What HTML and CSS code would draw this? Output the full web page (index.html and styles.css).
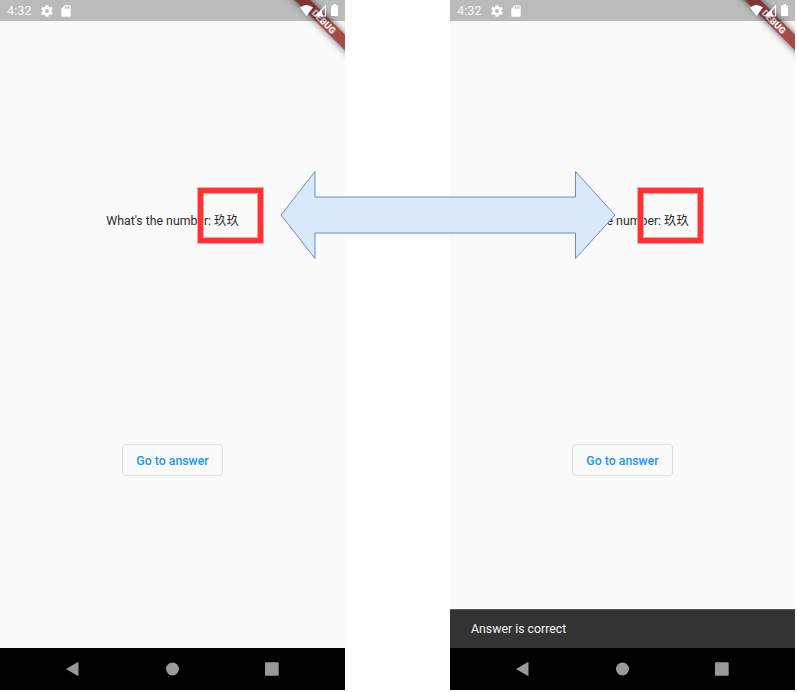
FILE: index.html
```html
<!DOCTYPE html>
<html lang="en">
<head>
<meta charset="utf-8">
<title>Number quiz</title>
<link rel="stylesheet" href="styles.css">
</head>
<body>
<svg class="defs" width="0" height="0" aria-hidden="true">
  <symbol id="gear" viewBox="0 0 24 24"><path d="M19.4 13a7.5 7.5 0 0 0 0-2l2.1-1.6c.2-.2.3-.4.1-.7l-2-3.4c-.1-.2-.4-.3-.6-.2l-2.500 1a7.300 7.300 0 0 0-1.700-1l-.4-2.600c0-.3-.2-.5-.5-.5h-4c-.2 0-.4.2-.5.5L9 5.100a7.700 7.700 0 0 0-1.700 1l-2.400-1c-.3-.1-.5 0-.7.200l-2 3.400c-.1.200 0 .5.200.7L4.500 11a7.500 7.500 0 0 0 0 2l-2.100 1.600c-.2.200-.2.400-.1.700l2 3.400c.1.200.4.300.6.200l2.500-1c.5.400 1.100.7 1.700 1l.4 2.600c0 .3.200.5.500.5h4c.3 0 .5-.2.5-.5l.4-2.600a7.300 7.300 0 0 0 1.700-1l2.500 1c.2.100.5 0 .6-.2l2-3.400c.1-.3.100-.5-.1-.7zM12 15.600a3.600 3.600 0 1 1 0-7.200 3.600 3.600 0 0 1 0 7.200z"/></symbol>
  <symbol id="sd" viewBox="0 0 24 24"><path d="M18 2h-8L4 8v12c0 1.100.9 2 2 2h12c1.100 0 2-.9 2-2V4c0-1.100-.9-2-2-2zm-6 6h-2V4h2zm3 0h-2V4h2zm3 0h-2V4h2z"/></symbol>
</svg>
<main class="screens">
  <section class="phone">
    <div class="banner">DEBUG</div>
    <header class="status">
      <span class="time">4:32</span>
      <svg class="gear"><use href="#gear"/></svg>
      <svg class="sd"><use href="#sd"/></svg>
      <svg class="signals" viewBox="0 0 42 14"><path d="M0 3.500Q6.500 -1.500 13 3.500L6.500 12z"/><path fill-rule="evenodd" d="M26 .5v12H14.500zM25 3.200L22 6.400V9L23.500 11.500H25z"/><path d="M32 1.500h1.500V0h2.500v1.500H38V12h-7V1.500z"/></svg>
    </header>
    <div class="body">
      <p class="question">What's the number: 玖玖</p>
      <button class="answer">Go to answer</button>
    </div>
    <footer class="nav">
      <svg viewBox="0 0 345 42"><path d="M66 21L77.500 14.200Q78.500 13.700 78.500 14.700V27.200Q78.500 28.200 77.500 27.700z"/><circle cx="172.500" cy="21" r="6.500"/><rect x="265" y="14.300" width="13.700" height="13.500" rx="1"/></svg>
    </footer>
  </section>
  <section class="phone">
    <div class="banner">DEBUG</div>
    <header class="status">
      <span class="time">4:32</span>
      <svg class="gear"><use href="#gear"/></svg>
      <svg class="sd"><use href="#sd"/></svg>
      <svg class="signals" viewBox="0 0 42 14"><path d="M0 3.500Q6.500 -1.500 13 3.500L6.500 12z"/><path fill-rule="evenodd" d="M26 .5v12H14.500zM25 3.200L22 6.400V9L23.500 11.500H25z"/><path d="M32 1.500h1.500V0h2.500v1.500H38V12h-7V1.500z"/></svg>
    </header>
    <div class="body">
      <p class="question">What's the number: 玖玖</p>
      <button class="answer">Go to answer</button>
    </div>
    <div class="snackbar">Answer is correct</div>
    <footer class="nav">
      <svg viewBox="0 0 345 42"><path d="M66 21L77.500 14.200Q78.500 13.700 78.500 14.700V27.200Q78.500 28.200 77.500 27.700z"/><circle cx="172.500" cy="21" r="6.500"/><rect x="265" y="14.300" width="13.700" height="13.500" rx="1"/></svg>
    </footer>
  </section>
</main>
<svg class="annotations" viewBox="0 0 797 692">
  <g class="frame"><rect x="200.500" y="190.500" width="60" height="50"/><rect x="640.500" y="190.500" width="60" height="50"/></g>
  <g class="edge"><path d="M197.500 187.500h66v56h-66zM203.500 193.500h54v44h-54zM637.500 187.500h66v56h-66zM643.500 193.500h54v44h-54z"/></g>
  <path class="arrow" d="M281 215L315 171.500V197H575.500V171.500L615 215L575.500 258.500V233H315V258.500z"/>
</svg>
</body>
</html>
```

FILE: styles.css
```css
* { box-sizing: border-box; }
body {
  margin: 0;
  background: #fff;
  font-family: Roboto, "Noto Sans CJK SC", sans-serif;
  font-size: 12.3px;
  color: #2a2a2a;
}
.defs { position: absolute; }
.screens { display: flex; gap: 105px; height: 690px; }
.phone {
  position: relative;
  display: flex;
  flex-direction: column;
  width: 345px;
  height: 690px;
  overflow: hidden;
  background: #fafafa;
}
.status {
  position: relative;
  display: flex;
  align-items: center;
  height: 21px;
  padding: 0 6px 0 7px;
  background: rgba(0, 0, 0, .25);
  color: #fff;
}
.status svg { fill: #fff; }
.time { width: 33px; font-size: 12.7px; line-height: 21px; opacity: .9; }
.gear { width: 14px; height: 14px; }
.sd { width: 14px; height: 14px; margin-left: 5px; }
.signals { width: 42px; height: 14px; margin: 1px -3px 0 auto; }
.banner {
  position: absolute;
  top: 16px;
  right: -24px;
  width: 90px;
  height: 11px;
  transform: rotate(45deg);
  background: #a94a4a;
  box-shadow: 0 0 7px rgba(0, 0, 0, .65);
  color: #fff;
  font-size: 9.2px;
  font-weight: 900;
  line-height: 11px;
  text-align: center;
}
.body { flex: 1; display: flex; flex-direction: column; align-items: center; }
.question {
  margin: 191px 0 0;
  line-height: 18px;
  height: 18px;
  white-space: nowrap;
}
.answer {
  width: 101px;
  height: 32px;
  margin-top: 214px;
  padding: 2px 0 0;
  border: 1px solid #dedede;
  border-radius: 4px;
  background: transparent;
  color: #2196f3;
  font: 500 12.3px/28px Roboto, sans-serif;
}
.snackbar {
  height: 39px;
  padding-left: 21px;
  border-top: 1px solid #555;
  background: #333;
  color: #f4f4f4;
  line-height: 38px;
}
.nav { height: 42px; background: #000; }
.nav svg { display: block; width: 345px; height: 42px; fill: #999; }
.annotations { position: absolute; top: 0; left: 0; width: 797px; height: 692px; }
.frame { fill: none; stroke: #f33; stroke-width: 6; }
.edge { fill: none; stroke: #ffa0a0; stroke-width: 1; }
.arrow { fill: #dae8fc; stroke: #6c8ebf; stroke-width: 1; }
```
